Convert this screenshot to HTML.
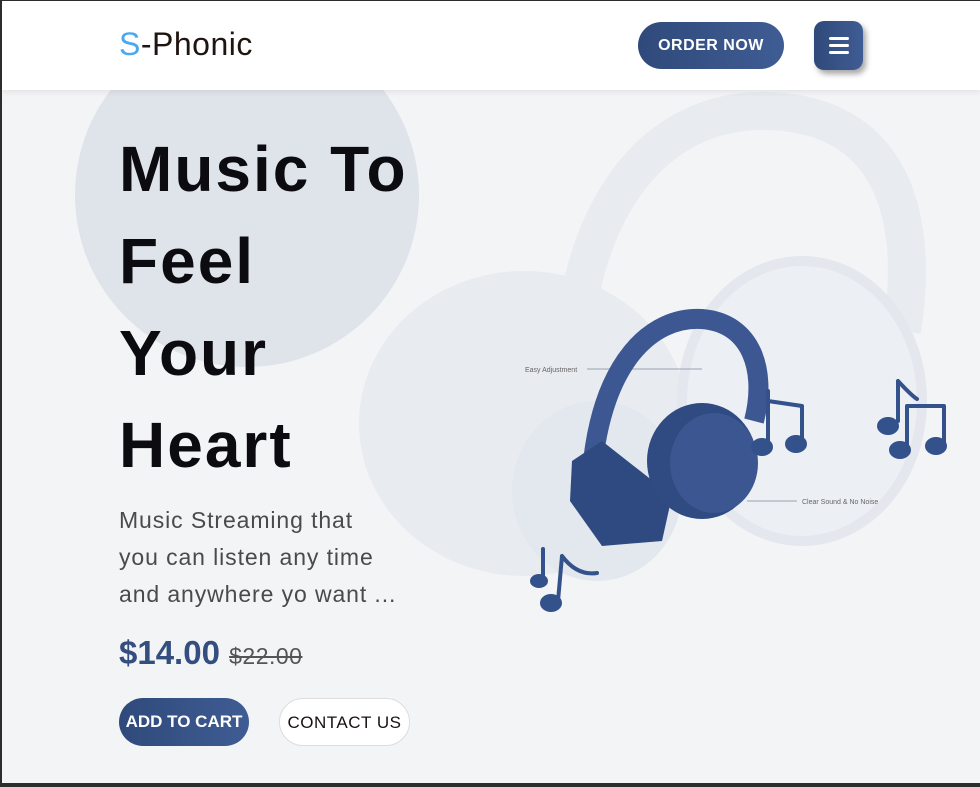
<!DOCTYPE html>
<html><head><meta charset="utf-8"><style>
*{margin:0;padding:0;box-sizing:border-box}
html,body{width:980px;height:787px;overflow:hidden;background:#2a2d29}
.page{position:absolute;left:2px;top:1px;width:978px;height:782px;background:#f3f4f6;overflow:hidden;font-family:"Liberation Sans",sans-serif}
.hdr{position:absolute;left:0;top:0;width:978px;height:89px;background:#fff;box-shadow:0 2px 6px rgba(0,0,0,.08);z-index:5}
.logo{position:absolute;left:117px;top:25px;font-size:32px;color:#1e1410;letter-spacing:0.5px}
.logo b{color:#4aa8f0;font-weight:normal}
.order{position:absolute;left:636px;top:21px;width:146px;height:47px;border-radius:24px;background:linear-gradient(90deg,#2f4a7a,#3f5c94);color:#fff;font-weight:bold;font-size:16px;text-align:center;line-height:47px;letter-spacing:0.5px}
.menu{position:absolute;left:812px;top:20px;width:49px;height:49px;border-radius:10px;background:linear-gradient(90deg,#2f4a7a,#3f5c94);box-shadow:3px 4px 6px rgba(0,0,0,.35)}
.menu i{position:absolute;left:15px;width:20px;height:3px;background:#fff;border-radius:2px}
.circ{position:absolute;border-radius:50%}
h1{position:absolute;left:117px;top:122px;font-size:64px;line-height:92px;font-weight:bold;color:#0b0b10;letter-spacing:2px}
.desc{position:absolute;left:117px;top:501px;font-size:23px;line-height:37px;color:#4a4a4a;letter-spacing:0.9px}
.price{position:absolute;left:117px;top:633px;font-size:33px;font-weight:bold;color:#344e80}
.old{font-size:23px;font-weight:normal;color:#555;text-decoration:line-through;letter-spacing:0.5px}
.btn{position:absolute;top:697px;height:48px;border-radius:24px;font-size:17px;font-weight:bold;text-align:center;line-height:48px}
</style></head><body><div class="page">
<div class="circ" style="left:73px;top:22px;width:344px;height:344px;background:#dfe3ea"></div>
<div class="circ" style="left:357px;top:270px;width:330px;height:305px;background:#e8ebf0"></div>
<svg style="position:absolute;left:0;top:0" width="978" height="782">
<g fill="none" stroke="#e8ebf0" stroke-width="38">
<path d="M570 420 C560 230 640 110 760 110 C880 110 920 200 900 330"/>
</g>
<ellipse cx="800" cy="400" rx="120" ry="140" fill="#eceff3" stroke="#e4e7ed" stroke-width="10"/>
<ellipse cx="595" cy="490" rx="85" ry="90" fill="#e3e7ee"/>
<g stroke="#9aa3b0" stroke-width="1"><line x1="585" y1="368" x2="700" y2="368"/><line x1="745" y1="500" x2="795" y2="500"/></g>
<text x="523" y="371" font-size="7" fill="#666" font-family="Liberation Sans">Easy Adjustment</text>
<text x="800" y="503" font-size="7" fill="#666" font-family="Liberation Sans">Clear Sound &amp; No Noise</text>
<path d="M590 470 C600 360 650 315 700 318 C750 322 765 370 752 420" fill="none" stroke="#3c5791" stroke-width="20"/>
<path d="M570 460 L600 440 L670 495 L660 540 L600 545 L568 500Z" fill="#2f4a80"/>
<ellipse cx="700" cy="460" rx="55" ry="58" fill="#304a82"/>
<ellipse cx="712" cy="462" rx="44" ry="50" fill="#3b5690"/>
<g fill="#33518a" stroke="#33518a" stroke-width="4" stroke-linecap="round">
<path d="M766 390 L766 445 M800 405 L800 440 M766 400 L800 405" fill="none"/>
<ellipse cx="760" cy="446" rx="9" ry="7"/><ellipse cx="794" cy="443" rx="9" ry="7"/>
<path d="M896 380 L896 420 M905 405 L905 448 M942 405 L942 443 M905 405 L942 405 M896 380 Q910 395 915 398" fill="none"/>
<ellipse cx="886" cy="425" rx="9" ry="7"/><ellipse cx="898" cy="449" rx="9" ry="7"/><ellipse cx="934" cy="445" rx="9" ry="7"/>
<path d="M541 548 L541 582 M560 555 L556 600 M560 555 Q575 575 595 572" fill="none"/>
<ellipse cx="537" cy="580" rx="7" ry="5"/><ellipse cx="549" cy="602" rx="9" ry="7"/>
</g>
</svg>
<div class="hdr">
<div class="logo"><b>S</b>-Phonic</div>
<div class="order">ORDER NOW</div>
<div class="menu"><i style="top:16px"></i><i style="top:23px"></i><i style="top:30px"></i></div>
</div>
<h1>Music To<br>Feel<br>Your<br>Heart</h1>
<div class="desc">Music Streaming that<br>you can listen any time<br>and anywhere yo want ...</div>
<div class="price">$14.00 <span class="old">$22.00</span></div>
<div class="btn" style="left:117px;width:130px;background:linear-gradient(90deg,#2f4a7a,#3f5c94);color:#fff">ADD TO CART</div>
<div class="btn" style="left:277px;width:131px;background:#fff;border:1px solid #ddd;color:#1a1010;font-weight:normal;letter-spacing:0.5px">CONTACT US</div>
</div></body></html>
